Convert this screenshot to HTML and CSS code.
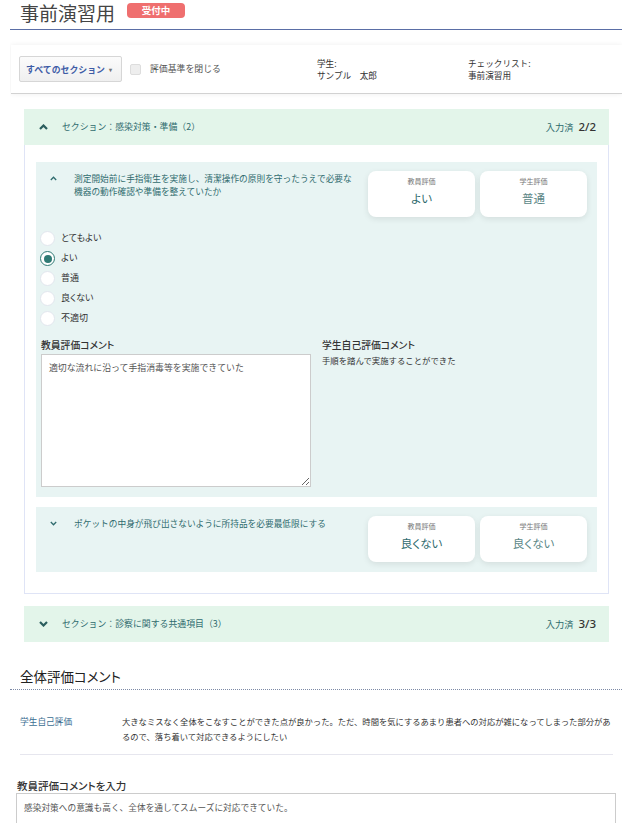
FILE: index.html
```html
<!DOCTYPE html>
<html lang="ja">
<head>
    <meta charset="UTF-8">
    <meta name="viewport" content="width=device-width, initial-scale=1.0">
    <title>事前演習用</title>
    <link rel="stylesheet" href="styles.css">
</head>
<body>
<div class="page">

    <header class="page-header">
        <h1>事前演習用</h1>
        <span class="badge">受付中</span>
    </header>

    <div class="toolbar">
        <div class="toolbar-left">
            <button class="section-select">すべてのセクション<span class="caret">▾</span></button>
            <label class="check"><input type="checkbox">評価基準を閉じる</label>
        </div>
        <div class="info info-student">
            <span>学生:</span>
            <span>サンプル　太郎</span>
        </div>
        <div class="info">
            <span>チェックリスト:</span>
            <span>事前演習用</span>
        </div>
    </div>

    <!-- section 1 (open) -->
    <section class="section">
        <div class="section-head">
            <svg class="chev-bold" width="9" height="6" viewBox="0 0 9 6"><polyline points="1,5 4.5,1.5 8,5" /></svg>
            <span class="section-title">セクション：感染対策・準備（2）</span>
            <span class="progress">入力済<b>2/2</b></span>
        </div>
        <div class="section-body">

            <div class="item">
                <div class="item-head">
                    <svg class="chev" width="7" height="5" viewBox="0 0 7 5"><polyline points="0.8,4 3.5,1.2 6.2,4" /></svg>
                    <p class="item-title">測定開始前に手指衛生を実施し、清潔操作の原則を守ったうえで必要な機器の動作確認や準備を整えていたか</p>
                    <div class="score-cards">
                        <div class="score-card">
                            <span class="score-label">教員評価</span>
                            <span class="score-value">よい</span>
                        </div>
                        <div class="score-card student">
                            <span class="score-label">学生評価</span>
                            <span class="score-value">普通</span>
                        </div>
                    </div>
                </div>

                <ul class="radio-list">
                    <li><input type="radio" name="q1"><span>とてもよい</span></li>
                    <li><input type="radio" name="q1" checked><span>よい</span></li>
                    <li><input type="radio" name="q1"><span>普通</span></li>
                    <li><input type="radio" name="q1"><span>良くない</span></li>
                    <li><input type="radio" name="q1"><span>不適切</span></li>
                </ul>

                <div class="comments">
                    <div class="comment-col">
                        <div class="comment-label">教員評価コメント</div>
                        <textarea class="comment-input">適切な流れに沿って手指消毒等を実施できていた</textarea>
                    </div>
                    <div class="comment-col">
                        <div class="comment-label">学生自己評価コメント</div>
                        <p class="comment-text">手順を踏んで実施することができた</p>
                    </div>
                </div>
            </div>

            <div class="item">
                <div class="item-head">
                    <svg class="chev" width="7" height="5" viewBox="0 0 7 5"><polyline points="0.8,1 3.5,3.8 6.2,1" /></svg>
                    <p class="item-title">ポケットの中身が飛び出さないように所持品を必要最低限にする</p>
                    <div class="score-cards">
                        <div class="score-card">
                            <span class="score-label">教員評価</span>
                            <span class="score-value">良くない</span>
                        </div>
                        <div class="score-card student">
                            <span class="score-label">学生評価</span>
                            <span class="score-value">良くない</span>
                        </div>
                    </div>
                </div>
            </div>

        </div>
    </section>

    <!-- section 2 (closed) -->
    <section class="section">
        <div class="section-head">
            <svg class="chev-bold" width="9" height="6" viewBox="0 0 9 6"><polyline points="1,1 4.5,4.5 8,1" /></svg>
            <span class="section-title">セクション：診察に関する共通項目（3）</span>
            <span class="progress">入力済<b>3/3</b></span>
        </div>
    </section>

    <h2 class="overall-title">全体評価コメント</h2>

    <div class="overall-row">
        <div class="overall-label">学生自己評価</div>
        <p class="overall-text">大きなミスなく全体をこなすことができた点が良かった。ただ、時間を気にするあまり患者への対応が雑になってしまった部分があるので、落ち着いて対応できるようにしたい</p>
    </div>

    <div class="overall-input">
        <div class="input-label">教員評価コメントを入力</div>
        <textarea class="overall-textarea">感染対策への意識も高く、全体を通してスムーズに対応できていた。</textarea>
    </div>

</div>
</body>
</html>
```

FILE: styles.css
```css
:root {
    --teal: #2f6b6e;
    --teal-light: #5c8787;
    --section-bg: #e3f5ea;
    --item-bg: #e8f4f3;
    --border-soft: #dfe4f6;
    --text: #333333;
    --text-light: #666666;
    --shadow-card: 0 2px 6px rgba(0, 0, 0, 0.09);
}

* {
    box-sizing: border-box;
    margin: 0;
    padding: 0;
}

body {
    font-family: "Noto Sans CJK JP", "Noto Sans", sans-serif;
    color: var(--text);
    background: #ffffff;
    font-size: 8.6px;
    line-height: 1.4;
}

.page {
    width: 612px;
    margin-left: 10px;
    overflow: hidden;
    height: 823px;
}

/* header */
.page-header {
    display: flex;
    align-items: center;
    height: 30px;
    padding-left: 10px;
    padding-bottom: 4px;
    border-bottom: 1px solid #5a6ea6;
}

.page-header h1 {
    font-size: 19px;
    font-weight: 400;
    color: #444444;
    line-height: 24px;
}

.badge {
    margin-left: 12px;
    background: #ef6f6f;
    color: #ffffff;
    font-size: 9.5px;
    font-weight: 700;
    border-radius: 4px;
    width: 58px;
    height: 15px;
    line-height: 15px;
    text-align: center;
    margin-top: -4px;
}

/* toolbar */
.toolbar {
    display: flex;
    align-items: center;
    margin-top: 15px;
    margin-left: 1px;
    height: 49px;
    padding-left: 8px;
    background: #ffffff;
    border-bottom: 1px solid #d2d2d2;
    box-shadow: 0 0 5px rgba(0, 0, 0, 0.07);
}

.toolbar-left {
    display: flex;
    align-items: center;
    width: 298px;
}

.section-select {
    height: 26px;
    width: 103px;
    padding-left: 6px;
    text-align: left;
    font-family: inherit;
    font-size: 8.9px;
    font-weight: 700;
    color: #3e5ca6;
    background: linear-gradient(#fbfbfb, #efefef);
    border: 1px solid #d6d6d6;
    border-radius: 2px;
}

.caret {
    font-size: 6px;
    color: #777777;
    margin-left: 4px;
    vertical-align: 1px;
}

.check {
    display: flex;
    align-items: center;
    margin-left: 8px;
    color: #555555;
    font-size: 8.9px;
}

.check input {
    appearance: none;
    width: 11px;
    height: 11px;
    margin-right: 9px;
    background: #eeeeee;
    border: 1px solid #dddddd;
    border-radius: 2px;
}

.info {
    display: flex;
    flex-direction: column;
    line-height: 12px;
    font-size: 8.6px;
    color: #333333;
}

.info-student {
    width: 151px;
}

/* sections */
.section {
    margin: 15px 13px 0 14px;
}

.section + .section {
    margin-top: 12px;
}

.section-head {
    display: flex;
    align-items: center;
    height: 36px;
    padding: 0 13px 0 15px;
    background: var(--section-bg);
    color: var(--teal);
}

.chev-bold {
    fill: none;
    stroke: #2b5e5e;
    stroke-width: 2.2;
}

.chev {
    fill: none;
    stroke: #2f6b6e;
    stroke-width: 1.3;
}

.section-title {
    margin-left: 14px;
    font-size: 8.9px;
    flex: 1;
}

.progress {
    font-size: 9.2px;
}

.progress b {
    margin-left: 5px;
    font-family: "Noto Sans", sans-serif;
    font-weight: 500;
    font-size: 11.5px;
    color: #333333;
}

.section-body {
    border: 1px solid var(--border-soft);
    border-top: none;
    padding: 17px 11px 21px 11px;
}

/* items */
.item {
    background: var(--item-bg);
    padding: 9px 10px 10px 4px;
}

.item + .item {
    margin-top: 10px;
}

.item-head {
    display: flex;
    align-items: flex-start;
}

.item-head .chev {
    margin: 5px 0 0 10px;
    flex-shrink: 0;
}

.item-title {
    flex: 1;
    margin: 1px 10px 0 17px;
    color: var(--teal);
    font-size: 8.7px;
    line-height: 13px;
}

.score-cards {
    display: flex;
    gap: 5px;
}

.score-card {
    width: 107px;
    height: 46px;
    background: #ffffff;
    border-radius: 8px;
    box-shadow: var(--shadow-card);
    display: flex;
    flex-direction: column;
    align-items: center;
    padding-top: 5px;
}

.score-label {
    font-size: 7px;
    color: #777777;
    line-height: 10px;
}

.score-value {
    margin-top: 4px;
    font-size: 11.5px;
    color: var(--teal);
    font-feature-settings: "palt";
    line-height: 16px;
}

.score-card.student .score-value {
    color: var(--teal-light);
}

/* radios */
.radio-list {
    list-style: none;
    margin-top: 14px;
    display: flex;
    flex-direction: column;
    gap: 5px;
}

.radio-list li {
    display: flex;
    align-items: center;
    height: 15px;
    font-size: 9px;
    color: #333333;
    font-feature-settings: "palt";
}

.radio-list input {
    appearance: none;
    width: 15px;
    height: 15px;
    margin-right: 6px;
    border-radius: 50%;
    background: #ffffff;
    border: 1px solid #e2e6ee;
    display: grid;
    place-items: center;
}

.radio-list input:checked {
    border: 1.5px solid #2f7a74;
}

.radio-list input:checked::after {
    content: '';
    width: 8px;
    height: 8px;
    border-radius: 50%;
    background: #2f7a74;
}

/* comments */
.comments {
    display: flex;
    gap: 11px;
    margin-top: 13px;
    padding-left: 1px;
}

.comment-label {
    font-size: 9.8px;
    font-weight: 500;
    color: #333333;
    font-feature-settings: "palt";
    line-height: 13px;
}

.comment-input {
    display: block;
    width: 270px;
    height: 133px;
    margin-top: 2px;
    padding: 6px 7px;
    font-family: inherit;
    font-size: 8.9px;
    color: #555555;
    border: 1px solid #cccccc;
    background: #ffffff;
}

.comment-text {
    margin-top: 3px;
    font-size: 8.4px;
    color: #333333;
}

/* overall */
.overall-title {
    margin-top: 24px;
    padding: 0 0 3px 10px;
    font-size: 13.5px;
    font-weight: 400;
    line-height: 20px;
    color: #222222;
    font-feature-settings: "palt";
    border-bottom: 1px dotted #7d8aa6;
}

.overall-row {
    display: flex;
    margin: 16px 9px 0 10px;
    padding: 8px 0 10px;
    border-bottom: 1px solid #e6e6ee;
}

.overall-label {
    width: 102px;
    flex-shrink: 0;
    font-size: 8.7px;
    color: #3b6e92;
    line-height: 15px;
}

.overall-text {
    font-size: 8.3px;
    line-height: 15px;
    color: #333333;
}

.overall-input {
    margin: 24px 6px 0 6px;
}

.input-label {
    padding-left: 1px;
    font-size: 10.5px;
    font-weight: 500;
    color: #333333;
    line-height: 14px;
    font-feature-settings: "palt";
}

.overall-textarea {
    display: block;
    width: 600px;
    height: 60px;
    padding: 7px 7px;
    font-family: inherit;
    font-size: 8.7px;
    color: #555555;
    border: 1px solid #cccccc;
    resize: none;
}
```
